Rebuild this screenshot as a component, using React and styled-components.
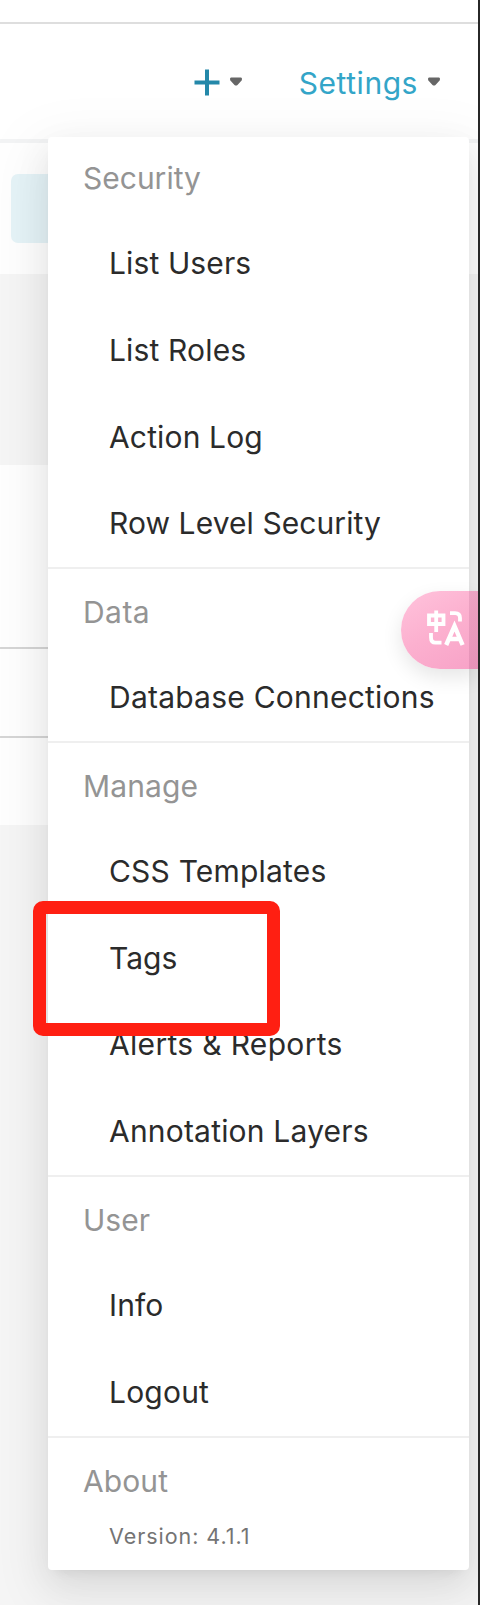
import React from "react";
import styled, { createGlobalStyle } from "styled-components";

const GlobalStyle = createGlobalStyle`
  *, *::before, *::after { box-sizing: border-box; }
  body { margin: 0; background: #fff; font-family: Inter, "Liberation Sans", sans-serif; }
`;

const Screen = styled.div`
  position: relative;
  width: 480px;
  height: 1605px;
  overflow: hidden;
  border-right: 2px solid #272727;
  background: #f6f6f6;
`;

const TopStrip = styled.div`
  height: 24px;
  background: #fff;
  border-bottom: 2px solid #dedede;
`;

const NavBar = styled.header`
  display: flex;
  justify-content: flex-end;
  align-items: center;
  height: 119px;
  padding: 1px 38px 0 0;
  background: #fff;
  border-bottom: 4px solid #f3f4f5;
`;

const NavItem = styled.div`
  display: flex;
  align-items: center;
  gap: ${(p) => p.$gap}px;
  margin-left: 57px;
`;

const NavLabel = styled.span`
  padding-top: 1px;
  font-size: 30px;
  line-height: 40px;
  letter-spacing: 0.55px;
  color: #33a5c8;
`;

const SubHeader = styled.div`
  height: 131px;
  padding: 31px 0 0 11px;
  background: #fff;
`;

const ActiveTab = styled.div`
  width: 120px;
  height: 69px;
  border-radius: 7px;
  background: #e6f4f8;
`;

const Filters = styled.div`
  height: 191px;
  background: #f6f6f6;
`;

const TableRow = styled.div`
  width: 460px;
  height: ${(p) => p.$height}px;
  background: #fff;
  border-bottom: ${(p) => (p.$last ? 0 : 2)}px solid #d6d6d6;
`;

const Menu = styled.nav`
  position: absolute;
  top: 137px;
  left: 48px;
  width: 421px;
  height: 1433px;
  border-radius: 4px;
  background: #fff;
  box-shadow:
    0 7px 13px -9px rgba(0, 0, 0, 0.12),
    0 13px 35px 0 rgba(0, 0, 0, 0.08),
    0 20px 61px 17px rgba(0, 0, 0, 0.05);
`;

const Section = styled.section`
  & + & { border-top: 2px solid #efefef; }
`;

const SectionTitle = styled.h2`
  margin: 0;
  height: ${(p) => p.$height}px;
  padding: ${(p) => p.$offset || 0}px 0 0 35px;
  font-size: 30px;
  font-weight: 400;
  line-height: ${(p) => p.$height}px;
  letter-spacing: ${(p) => p.$spacing}px;
  color: #949494;
`;

const MenuItem = styled.a`
  display: block;
  height: 86.84px;
  padding-left: 61px;
  font-size: 30px;
  line-height: 86.84px;
  letter-spacing: ${(p) => p.$spacing}px;
  white-space: nowrap;
  color: #2b2b2b;
`;

const Version = styled.div`
  padding-left: 61px;
  margin-top: -2px;
  font-size: 21.5px;
  line-height: 32px;
  letter-spacing: 0.95px;
  color: #747474;
`;

const Highlight = styled.div`
  position: absolute;
  top: 901px;
  left: 33px;
  width: 247px;
  height: 135px;
  border: 13px solid #ff1f12;
  border-radius: 10px;
`;

const TranslateButton = styled.div`
  position: absolute;
  top: 591px;
  right: 0;
  display: flex;
  align-items: center;
  width: 77px;
  height: 78px;
  padding: 0 0 4px 25px;
  border-radius: 39px 0 0 39px;
  background: linear-gradient(90deg, transparent 68px, rgba(80, 0, 50, 0.1) 68px),
    linear-gradient(150deg, #ffc3dc 0%, #fcb0cf 50%, #f7a2c7 100%);
  box-shadow: 0 8px 20px rgba(0, 0, 0, 0.1);
`;

const CaretIcon = styled.svg`
  margin-bottom: 1px;
`;

const Caret = () => (
  <CaretIcon width="12" height="9" viewBox="0 0 12 9">
    <path d="M1 0.5H11Q12 0.5 12 2Q12 3.5 10.7 4.6L7.5 8Q6 9 4.5 8L1.3 4.6Q0 3.5 0 2Q0 0.5 1 0.5Z" fill="#666" />
  </CaretIcon>
);

const Plus = () => (
  <svg width="26" height="27" viewBox="0 0 26 27">
    <path d="M13 0.5V26.5M0.5 13.5H25.5" stroke="#2488a9" strokeWidth="4" />
  </svg>
);

const TranslateIcon = () => (
  <svg width="39" height="36" viewBox="0 0 39 36" fill="none" stroke="#fff" strokeWidth="3.8">
    <path d="M3 5.5H17.5V14H3ZM10.2 0.5V22" />
    <path d="M24 3.2H29Q34 3.2 34 8V11.5" />
    <path d="M5 23V27.5Q5 32.7 9.5 32.7H15.5" />
    <path d="M20.2 35L28.5 16L36.6 35M23 29H33.5" strokeWidth="4.4" />
  </svg>
);

const sections = [
  {
    title: "Security", height: 83, spacing: 0,
    items: [["List Users", 0.12], ["List Roles", 0.15], ["Action Log", 0.15], ["Row Level Security", 0.08]],
  },
  { title: "Data", height: 84.84, offset: 1, spacing: 0.45, items: [["Database Connections", 0.23]] },
  {
    title: "Manage", height: 84.84, offset: 1, spacing: 0.1,
    items: [["CSS Templates", 0.2], ["Tags", 0], ["Alerts & Reports", 0.32], ["Annotation Layers", 0.2]],
  },
  { title: "User", height: 84.84, offset: 1, spacing: 0.05, items: [["Info", 0.1], ["Logout", 0.2]] },
  { title: "About", height: 84.84, offset: 1, spacing: 0.1, items: [], version: "Version: 4.1.1" },
];

export default function App() {
  return (
    <>
      <GlobalStyle />
      <Screen>
        <TopStrip />
        <NavBar>
          <NavItem $gap={10}><Plus /><Caret /></NavItem>
          <NavItem $gap={10}><NavLabel>Settings</NavLabel><Caret /></NavItem>
        </NavBar>
        <SubHeader><ActiveTab /></SubHeader>
        <Filters />
        <TableRow $height={184} />
        <TableRow $height={89} />
        <TableRow $height={87} $last />
        <Menu>
          {sections.map((s) => (
            <Section key={s.title}>
              <SectionTitle $height={s.height} $offset={s.offset} $spacing={s.spacing}>{s.title}</SectionTitle>
              {s.items.map(([label, spacing]) => (
                <MenuItem key={label} $spacing={spacing}>{label}</MenuItem>
              ))}
              {s.version && <Version>{s.version}</Version>}
            </Section>
          ))}
        </Menu>
        <Highlight />
        <TranslateButton><TranslateIcon /></TranslateButton>
      </Screen>
    </>
  );
}
